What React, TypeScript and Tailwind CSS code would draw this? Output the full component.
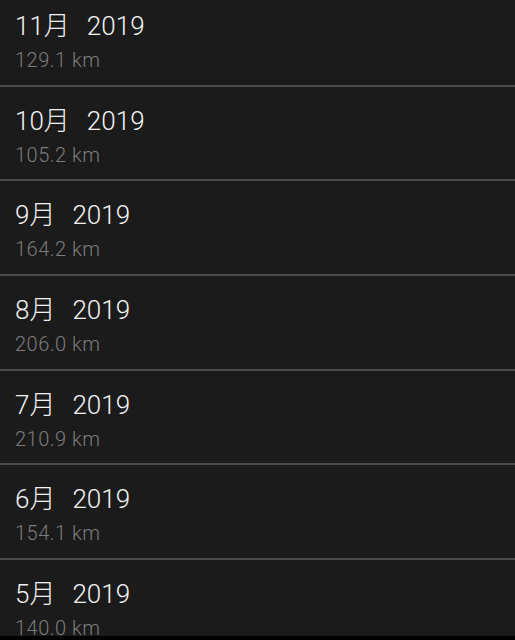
const months = [
    { month: "11月", year: "2019", distance: "129.1 km" },
    { month: "10月", year: "2019", distance: "105.2 km" },
    { month: "9月", year: "2019", distance: "164.2 km" },
    { month: "8月", year: "2019", distance: "206.0 km" },
    { month: "7月", year: "2019", distance: "210.9 km" },
    { month: "6月", year: "2019", distance: "154.1 km" },
    { month: "5月", year: "2019", distance: "140.0 km" },
];

function MonthRow({ month, year, distance }: { month: string; year: string; distance: string }) {
    return <div className="h-[94.7px] shrink-0 border-b-2 border-[#4b4b4b] px-[15px] pt-[19px]">
        <div className="flex items-baseline text-[26px] leading-[30px] font-light text-[#f2f2f2]">
            <span>{month}</span>
            <span className="ml-[17px]">{year}</span>
        </div>
        <div className="mt-[7px] text-[20px] leading-[24px] font-light tracking-[0.5px] text-[#7c7c7c]">{distance}</div>
    </div>
}

export default function App() {
    return <div className="w-[515px] h-[640px] bg-black" style={{ fontFamily: "Roboto, 'Noto Sans CJK JP', sans-serif" }}>
        <div className="h-[636px] overflow-hidden bg-[#1b1b1b]">
            <div className="flex flex-col -mt-[8px]">
                {months.map((m) => <MonthRow key={m.month} {...m} />)}
            </div>
        </div>
    </div>
}
